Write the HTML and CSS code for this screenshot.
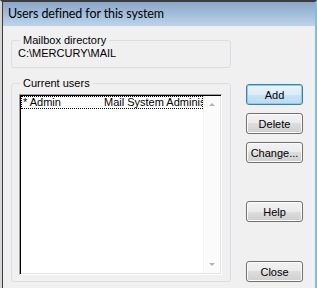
FILE: index.html
```html
<!DOCTYPE html>
<html lang="en">
<head>
    <meta charset="UTF-8">
    <title>Users defined for this system</title>
    <link rel="stylesheet" href="styles.css">
</head>
<body>

    <div class="frame">
        <div class="window">
            <!-- Title bar -->
            <div class="titlebar">Users defined for this system</div>

            <div class="dialog">
                <div class="groups">
                    <!-- Mailbox directory -->
                    <fieldset class="group mailbox">
                        <legend>Mailbox directory</legend>
                        <div class="path">C:\MERCURY\MAIL</div>
                    </fieldset>

                    <!-- User list -->
                    <fieldset class="group users">
                        <legend>Current users</legend>
                        <div class="listbox">
                            <div class="rows">
                                <div class="row selected">
                                    <span class="uid">* Admin</span>
                                    <span class="uname">Mail System Administrator</span>
                                </div>
                            </div>
                            <div class="scrollbar">
                                <div class="sb-btn"><span class="arrow up"></span></div>
                                <div class="sb-btn"><span class="arrow down"></span></div>
                            </div>
                        </div>
                    </fieldset>
                </div>

                <!-- Buttons -->
                <div class="buttons">
                    <button class="btn default">Add</button>
                    <button class="btn">Delete</button>
                    <button class="btn">Change...</button>
                    <button class="btn help">Help</button>
                    <button class="btn close">Close</button>
                </div>
            </div>
        </div>
    </div>

</body>
</html>
```

FILE: styles.css
```css
/* Page */
body {
    margin: 0;
    padding: 0;
    background-color: #f0f0f0;
    font-family: "Liberation Sans", Arial, sans-serif;
    font-size: 11px;
    color: #000;
}

/* Window frame */
.frame {
    width: 317px;
    height: 288px;
    box-sizing: border-box;
    border-top: 2px solid #3c3c3c;
    border-left: 2px solid #d6d6d6;
    border-right: 2px solid #5ccbf0;
    overflow: hidden;
}

.window {
    height: 100%;
    border-left: 1px solid #3a3a3a;
    background-color: #f0f0f0;
}

.titlebar {
    height: 24px;
    line-height: 24px;
    padding-left: 5px;
    font-family: Lato, "Liberation Sans", sans-serif;
    font-size: 12.5px;
    letter-spacing: -0.1px;
    background: linear-gradient(#8aa7c7, #bcd4ec);
    white-space: nowrap;
}

/* Dialog body */
.dialog {
    display: flex;
    padding-left: 8px;
}

.groups {
    width: 220px;
    padding-top: 8px;
}

/* Group boxes */
.group {
    margin: 0;
    border: 1px solid #d5dfe5;
    border-radius: 3px;
    min-width: 0;
}

.group legend {
    padding: 0 3px;
    line-height: 13px;
}

.mailbox {
    padding: 0 8px 7px 6px;
}

.mailbox legend {
    margin-left: 2px;
}

.path {
    line-height: 13px;
}

.users {
    margin-top: 9px;
    padding: 4px 8px 6px 7px;
}

.users legend {
    margin-left: 1px;
}

/* List box */
.listbox {
    display: flex;
    height: 181px;
    box-sizing: border-box;
    padding: 1px;
    border-top: 1px solid #a0a0a0;
    border-left: 1px solid #a0a0a0;
    border-right: 1px solid #fff;
    border-bottom: 1px solid #fff;
    box-shadow: inset 1px 1px 0 #000, inset -1px -1px 0 #e3e3e3;
    background-color: #fff;
}

.rows {
    flex: 1;
    min-width: 0;
}

.row {
    display: flex;
    height: 13px;
    line-height: 11px;
    padding-left: 1px;
    box-sizing: border-box;
    white-space: nowrap;
    overflow: hidden;
}

.row.selected {
    border: 1px dotted #000;
}

.uid {
    width: 81px;
    flex-shrink: 0;
}

.scrollbar {
    width: 17px;
    display: flex;
    flex-direction: column;
    justify-content: space-between;
    background-color: #fbfbfb;
    border-left: 1px solid #f2f2f2;
    box-sizing: border-box;
}

.sb-btn {
    height: 17px;
    display: flex;
    align-items: center;
    justify-content: center;
}

.arrow {
    width: 0;
    height: 0;
    border-left: 3px solid transparent;
    border-right: 3px solid transparent;
}

.arrow.up {
    border-bottom: 3px solid #b4b4b4;
}

.arrow.down {
    border-top: 3px solid #b4b4b4;
}

/* Buttons */
.buttons {
    display: flex;
    flex-direction: column;
    margin-left: 15px;
    padding-top: 58px;
}

.btn {
    width: 57px;
    height: 21px;
    margin: 0 0 8px 0;
    padding: 0;
    font-family: "Liberation Sans", Arial, sans-serif;
    font-size: 11px;
    color: #000;
    border: 1px solid #707070;
    border-radius: 3px;
    background: linear-gradient(#f2f2f2 0%, #ebebeb 50%, #dddddd 50%, #cfcfcf 100%);
    box-shadow: inset 0 0 0 1px #fcfcfc;
    cursor: pointer;
}

.btn.default {
    border-color: #3c7fb1;
    background: linear-gradient(#e9f4fc 0%, #dcecf9 50%, #c9e2f5 50%, #bcdaf2 100%);
    box-shadow: inset 0 0 0 1px #7fd1f3;
}

.btn.help {
    margin-top: 30px;
}

.btn.close {
    margin-top: 31px;
}
```
